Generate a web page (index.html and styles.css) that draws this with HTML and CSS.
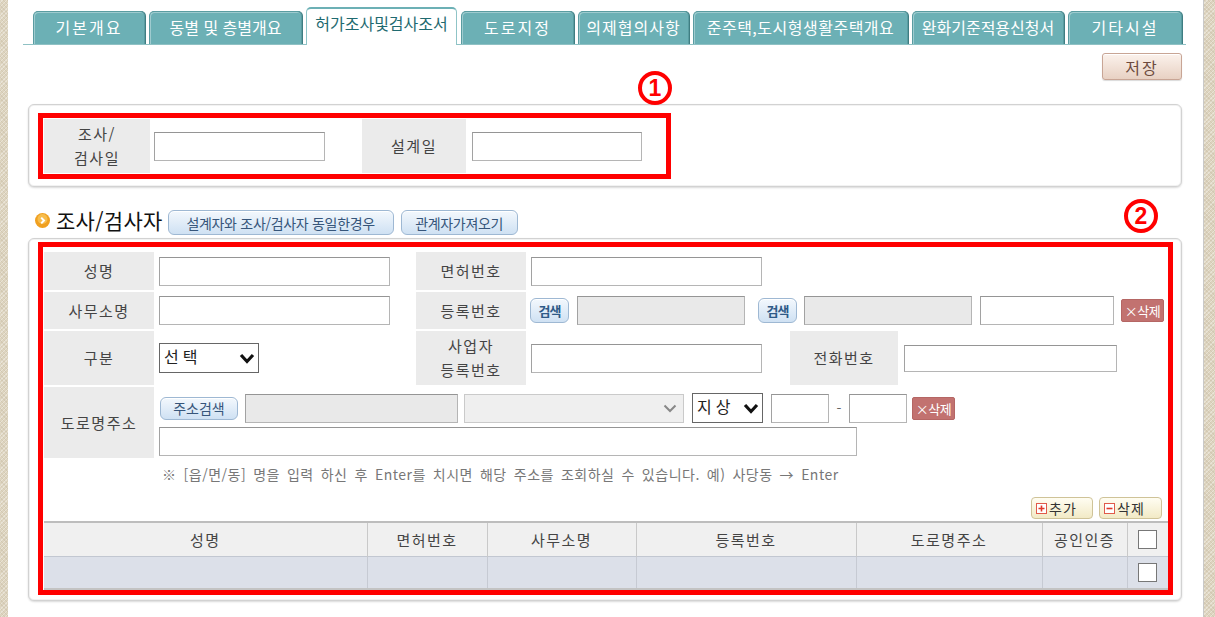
FILE: index.html
```html
<!DOCTYPE html>
<html lang="ko">
<head>
    <meta charset="UTF-8">
    <title>허가조사및검사조서</title>
    <link rel="stylesheet" href="styles.css">
</head>
<body>
<div class="frame">
    <ul class="tabs">
        <li class="tab">기본개요</li>
        <li class="tab">동별 및 층별개요</li>
        <li class="tab active">허가조사및검사조서</li>
        <li class="tab">도로지정</li>
        <li class="tab">의제협의사항</li>
        <li class="tab">준주택,도시형생활주택개요</li>
        <li class="tab">완화기준적용신청서</li>
        <li class="tab">기타시설</li>
    </ul>

    <div class="toolbar">
        <button class="btn-save">저장</button>
    </div>

    <!-- 조사/검사일 -->
    <div class="panel panel-date">
        <span class="mark mark-1">1</span>
        <div class="hl hl-date">
            <div class="lbl lbl-date">조사/<br>검사일</div>
            <div class="cell cell-date"><input class="inp w171" type="text"></div>
            <div class="lbl lbl-design">설계일</div>
            <div class="cell cell-design"><input class="inp w170" type="text"></div>
        </div>
    </div>

    <div class="sec-head">
        <svg class="bullet" width="15" height="15" viewBox="0 0 15 15">
            <circle cx="7.5" cy="7.5" r="7.5" fill="#f0a020"/>
            <circle cx="7.5" cy="6" r="5" fill="#f7bd4d"/>
            <path d="M6.2 4.6 L9 7.5 L6.2 10.4" fill="none" stroke="#fff" stroke-width="2"/>
        </svg>
        <h3>조사/검사자</h3>
        <button class="btn-blue btn-same">설계자와 조사/검사자 동일한경우</button>
        <button class="btn-blue btn-rel">관계자가져오기</button>
    </div>

    <!-- 조사/검사자 -->
    <div class="panel panel-insp">
        <span class="mark mark-2">2</span>
        <div class="hl hl-insp">
            <div class="form">
                <div class="frow r1">
                    <div class="lbl">성명</div>
                    <div class="cell c1"><input class="inp w231" type="text"></div>
                    <div class="lbl">면허번호</div>
                    <div class="cell c2"><input class="inp w231" type="text"></div>
                </div>
                <div class="frow r2">
                    <div class="lbl">사무소명</div>
                    <div class="cell c1"><input class="inp w231" type="text"></div>
                    <div class="lbl">등록번호</div>
                    <div class="cell c2">
                        <button class="btn-blue btn-find">검색</button>
                        <input class="inp ro w168 ml8" type="text" readonly>
                        <button class="btn-blue btn-find ml13">검색</button>
                        <input class="inp ro w168 ml7" type="text" readonly>
                        <input class="inp w134 ml8" type="text">
                        <button class="btn-del ml7">×삭제</button>
                    </div>
                </div>
                <div class="frow r3">
                    <div class="lbl">구분</div>
                    <div class="cell c1">
                        <span class="sel sel-type">
                            <select><option>선택</option></select>
                            <svg width="16" height="11" viewBox="0 0 16 11"><path d="M2 2 L8 8.5 L14 2" fill="none" stroke="#111" stroke-width="3.2"/></svg>
                        </span>
                    </div>
                    <div class="lbl">사업자<br>등록번호</div>
                    <div class="cell c2">
                        <input class="inp w231" type="text">
                        <div class="lbl lbl-tel">전화번호</div>
                        <input class="inp w213 tel" type="text">
                    </div>
                </div>
                <div class="frow r4">
                    <div class="lbl">도로명주소</div>
                    <div class="cell c-addr">
                        <div class="addr-line">
                            <button class="btn-blue btn-addr">주소검색</button>
                            <input class="inp ro w213 ml7" type="text" readonly>
                            <span class="sel sel-road ml6">
                                <select disabled><option></option></select>
                                <svg width="14" height="9" viewBox="0 0 14 9"><path d="M1.5 1.5 L7 7 L12.5 1.5" fill="none" stroke="#888" stroke-width="2"/></svg>
                            </span>
                            <span class="sel sel-floor ml8">
                                <select><option>지상</option></select>
                                <svg width="16" height="11" viewBox="0 0 16 11"><path d="M2 2 L8 8.5 L14 2" fill="none" stroke="#111" stroke-width="3.2"/></svg>
                            </span>
                            <input class="inp w58 ml8" type="text">
                            <span class="dash">-</span>
                            <input class="inp w58" type="text">
                            <button class="btn-del ml5">×삭제</button>
                        </div>
                        <input class="inp w698" type="text">
                    </div>
                </div>
            </div>

            <p class="note">※ [읍/면/동] 명을 입력 하신 후 Enter를 치시면 해당 주소를 조회하실 수 있습니다. 예) 사당동 → Enter</p>

            <div class="actions">
                <button class="btn-act">
                    <svg width="11" height="11" viewBox="0 0 11 11"><rect x="0.5" y="0.5" width="10" height="10" fill="#fff" stroke="#e05a4a"/><path d="M5.5 2.5 V8.5 M2.5 5.5 H8.5" stroke="#e03a2a" stroke-width="1.6"/></svg>추가
                </button>
                <button class="btn-act">
                    <svg width="11" height="11" viewBox="0 0 11 11"><rect x="0.5" y="0.5" width="10" height="10" fill="#fff" stroke="#e05a4a"/><path d="M2.5 5.5 H8.5" stroke="#e03a2a" stroke-width="1.6"/></svg>삭제
                </button>
            </div>

            <table class="grid">
                <colgroup>
                    <col class="col-name"><col class="col-lic"><col class="col-office">
                    <col class="col-reg"><col class="col-addr"><col class="col-cert"><col class="col-chk">
                </colgroup>
                <thead>
                    <tr>
                        <th>성명</th>
                        <th>면허번호</th>
                        <th>사무소명</th>
                        <th>등록번호</th>
                        <th>도로명주소</th>
                        <th>공인인증</th>
                        <th><input class="chk" type="checkbox"></th>
                    </tr>
                </thead>
                <tbody>
                    <tr>
                        <td></td><td></td><td></td><td></td><td></td><td></td>
                        <td><input class="chk" type="checkbox"></td>
                    </tr>
                </tbody>
            </table>
        </div>
    </div>
</div>
</body>
</html>
```

FILE: styles.css
```css
body {
    margin: 0;
    font-family: "Noto Sans CJK KR", "Liberation Sans", sans-serif;
    color: #333;
    background-color: #ddd4bf;
    background-image: repeating-linear-gradient(45deg, rgba(120,100,70,0.10) 0 1px, transparent 1px 3px),
                      repeating-linear-gradient(-45deg, rgba(255,255,255,0.35) 0 1px, transparent 1px 3px);
}

.frame {
    box-sizing: border-box;
    width: 1196px;
    min-height: 100vh;
    margin-left: 8px;
    padding: 7px 21px 0 20px;
    background: #fff;
    border-right: 1px solid #c9c9c9;
}

/* tabs */
.tabs {
    display: flex;
    align-items: flex-end;
    gap: 4px;
    height: 37px;
    margin: 0 -4px 0 -5px;
    padding: 0 0 0 10px;
    list-style: none;
    border-bottom: 1px solid #8fc1c4;
}

.tab {
    box-sizing: border-box;
    height: 33px;
    line-height: 31px;
    text-align: center;
    color: #fff;
    font-size: 16px;
    letter-spacing: 1px;
    white-space: nowrap;
    background: #6cb0b5;
    border: 1px solid #5a9ca1;
    border-bottom: none;
    border-radius: 5px 5px 0 0;
    box-shadow: inset 1px 1px 0 rgba(255,255,255,0.35), 1px 0 0 #3f7d82;
}

.tab:nth-child(1) { width: 112px; letter-spacing: 2px; }
.tab:nth-child(2) { width: 153px; letter-spacing: 0; }
.tab:nth-child(3) { width: 151px; }
.tab:nth-child(4) { width: 113px; letter-spacing: 2px; }
.tab:nth-child(5) { width: 111px; }
.tab:nth-child(6) { width: 215px; letter-spacing: 0.5px; }
.tab:nth-child(7) { width: 152px; letter-spacing: 0; }
.tab:nth-child(8) { width: 114px; letter-spacing: 2px; }

.tab.active {
    height: 38px;
    margin-bottom: -1px;
    line-height: 28px;
    font-size: 16px;
    letter-spacing: 0;
    color: #1f6a70;
    background: #fff;
    border: 1px solid #8fc4c7;
    border-top: 2px solid #6cb0b5;
    border-bottom: none;
    box-shadow: none;
}

/* save */
.toolbar {
    display: flex;
    justify-content: flex-end;
    margin-top: 8px;
}

.btn-save {
    width: 80px;
    height: 27px;
    padding: 0;
    font-family: inherit;
    font-size: 16px;
    letter-spacing: 2px;
    color: #6d4b3e;
    background: linear-gradient(#fbf2ec, #e8d1c3);
    border: 1px solid #c8a595;
    border-radius: 3px;
    box-shadow: inset 0 1px 0 #fff, 0 1px 1px rgba(0,0,0,0.15);
}

/* panels */
.panel {
    position: relative;
    background: #fff;
    border: 1px solid #d2d2d2;
    border-radius: 6px;
    box-shadow: 0 1px 2px rgba(0,0,0,0.15), inset 0 0 0 1px #f2f2f2;
}

.panel-date {
    margin-top: 24px;
    padding: 8px 9px 7px;
}

.panel-insp {
    margin-top: 3px;
    padding: 3px 8px 5px 9px;
}

.hl {
    border: 5px solid #ff0000;
}

.mark {
    position: absolute;
    box-sizing: border-box;
    width: 34px;
    height: 34px;
    border: 4px solid #ff0000;
    border-radius: 50%;
    color: #ff0000;
    font: bold 23px/26px "Liberation Sans", sans-serif;
    text-align: center;
}

.mark-1 { top: -34px; left: 609px; }
.mark-2 { top: -40px; left: 1095px; }

/* labels and inputs */
.lbl {
    flex: none;
    display: flex;
    align-items: center;
    justify-content: center;
    text-align: center;
    width: 110px;
    background: #ebebeb;
    color: #444;
    font-size: 15px;
    letter-spacing: 1.5px;
    line-height: 24px;
}

.cell {
    display: flex;
    align-items: center;
}

.inp {
    box-sizing: border-box;
    height: 29px;
    margin: 0;
    padding: 0 4px;
    font-family: inherit;
    font-size: 14px;
    background: #fff;
    border: 1px solid #b5b5b5;
    border-top-color: #959595;
    border-left-color: #a2a2a2;
    flex: none;
}

.inp.ro { background: #e9e9e9; }

.w58 { width: 58px; }
.w134 { width: 134px; }
.w168 { width: 168px; }
.w170 { width: 170px; }
.w171 { width: 171px; }
.w213 { width: 213px; }
.w231 { width: 231px; }
.w698 { width: 698px; }

.ml5 { margin-left: 5px; }
.ml6 { margin-left: 6px; }
.ml7 { margin-left: 7px; }
.ml8 { margin-left: 8px; }
.ml13 { margin-left: 13px; }

/* date row */
.hl-date {
    display: flex;
    width: 622px;
    padding: 1px 0 1px 1px;
}

.lbl-date { width: 106px; height: 54px; }
.lbl-design { width: 104px; }
.cell-date { width: 212px; padding-left: 4px; box-sizing: border-box; }
.cell-design { flex: 1; padding-left: 6px; }

/* section heading */
.sec-head {
    display: flex;
    align-items: center;
    height: 25px;
    margin-top: 23px;
    padding-left: 7px;
}

.bullet { margin-top: -4px; }

.sec-head h3 {
    margin: 0 0 0 6px;
    font-size: 21px;
    font-weight: normal;
    letter-spacing: 0.3px;
    color: #111;
    line-height: 25px;
    position: relative;
    top: -2px;
}

.btn-blue {
    box-sizing: border-box;
    padding: 0;
    font-family: inherit;
    font-size: 14px;
    color: #36557a;
    background: linear-gradient(#f3f8fd, #cfe1f3);
    border: 1px solid #9eb8d3;
    border-radius: 6px;
    box-shadow: inset 0 1px 0 #fff;
    flex: none;
}

.btn-same { width: 226px; height: 25px; margin-left: 5px; letter-spacing: -0.3px; }
.btn-rel { width: 117px; height: 25px; margin-left: 7px; letter-spacing: -0.3px; }
.btn-find { width: 39px; height: 25px; font-size: 13px; font-weight: bold; letter-spacing: -1px; color: #2e5a88; }
.btn-addr { width: 78px; height: 23px; margin-left: 1px; }

.btn-del {
    flex: none;
    width: 43px;
    height: 23px;
    padding: 0;
    font-family: inherit;
    font-size: 13px;
    letter-spacing: -0.5px;
    color: #fff;
    background: #c27270;
    border: 1px solid #b56664;
    border-radius: 2px;
}

/* inspector form */
.form {
    padding: 5px 1px 0;
}

.frow {
    display: flex;
    margin-bottom: 2px;
}

.r1 { height: 38px; }
.r2 { height: 37px; }
.r3 { height: 54px; }
.r4 { height: 71px; margin-bottom: 0; }

.c1 { width: 262px; padding-left: 5px; box-sizing: border-box; flex: none; }
.c2 { flex: 1; padding-left: 5px; }
.r2 .c2 { padding-left: 4px; }

.lbl-tel {
    width: 108px;
    align-self: stretch;
    margin-left: 28px;
}

.tel { height: 27px; margin-left: 6px; }

.sel {
    position: relative;
    display: inline-block;
    flex: none;
}

.sel select {
    box-sizing: border-box;
    display: block;
    height: 30px;
    margin: 0;
    padding: 0 0 0 4px;
    font-family: inherit;
    font-size: 16px;
    letter-spacing: 4px;
    color: #222;
    background: #fff;
    border: 1px solid #666;
    border-radius: 0;
    appearance: none;
    -webkit-appearance: none;
}

.sel svg {
    position: absolute;
    right: 4px;
    top: 10px;
    pointer-events: none;
}

.sel-type select { width: 100px; padding-bottom: 6px; }
.sel-floor select { width: 71px; padding-bottom: 6px; }

.sel-road select {
    width: 220px;
    height: 29px;
    background: #e9e9e9;
    border-color: #b5b5b5;
}

.sel-road svg { right: 7px; top: 10px; }

.c-addr {
    flex-direction: column;
    align-items: flex-start;
    justify-content: flex-start;
    gap: 4px;
    padding: 6px 0 0 5px;
}

.addr-line {
    display: flex;
    align-items: center;
}

.dash {
    width: 20px;
    text-align: center;
    color: #666;
    font-size: 14px;
}

.note {
    margin: 6px 0 0 119px;
    height: 20px;
    line-height: 20px;
    font-size: 14px;
    color: #777;
    letter-spacing: 0.5px;
    word-spacing: 2.6px;
    white-space: nowrap;
}

.actions {
    display: flex;
    justify-content: flex-end;
    gap: 6px;
    margin: 13px 6px 0 0;
}

.btn-act {
    display: flex;
    align-items: center;
    gap: 2px;
    height: 22px;
    padding: 0 4px;
    font-family: inherit;
    font-size: 14px;
    letter-spacing: 1px;
    color: #333;
    background: linear-gradient(#fffdf2, #f2eac6);
    border: 1px solid #cfc398;
    border-radius: 4px;
}

.btn-act:first-child { width: 62px; }
.btn-act:last-child { width: 63px; }

/* list table */
.grid {
    width: 1124px;
    margin: 2px 1px 0;
    border-collapse: collapse;
    table-layout: fixed;
}

.col-name { width: 323px; }
.col-lic { width: 120px; }
.col-office { width: 149px; }
.col-reg { width: 220px; }
.col-addr { width: 186px; }
.col-cert { width: 85px; }
.col-chk { width: 41px; }

.grid th {
    height: 33px;
    padding: 0;
    font-size: 15px;
    font-weight: normal;
    letter-spacing: 1.5px;
    color: #444;
    background: #f0f0f0;
    border-top: 2px solid #bdbdbd;
    border-left: 1px solid #c9c9c9;
}

.grid td {
    height: 31px;
    padding: 0;
    text-align: center;
    background: #dce0e9;
    border-top: 1px solid #c2c7d1;
    border-left: 1px solid #c6cad3;
    border-bottom: 2px solid #c3c3c3;
}

.grid th:first-child,
.grid td:first-child { border-left: none; }

.chk {
    appearance: none;
    -webkit-appearance: none;
    display: block;
    width: 19px;
    height: 19px;
    margin: 0 auto;
    background: #fff;
    border: 1px solid #777;
    border-radius: 0;
}
```
